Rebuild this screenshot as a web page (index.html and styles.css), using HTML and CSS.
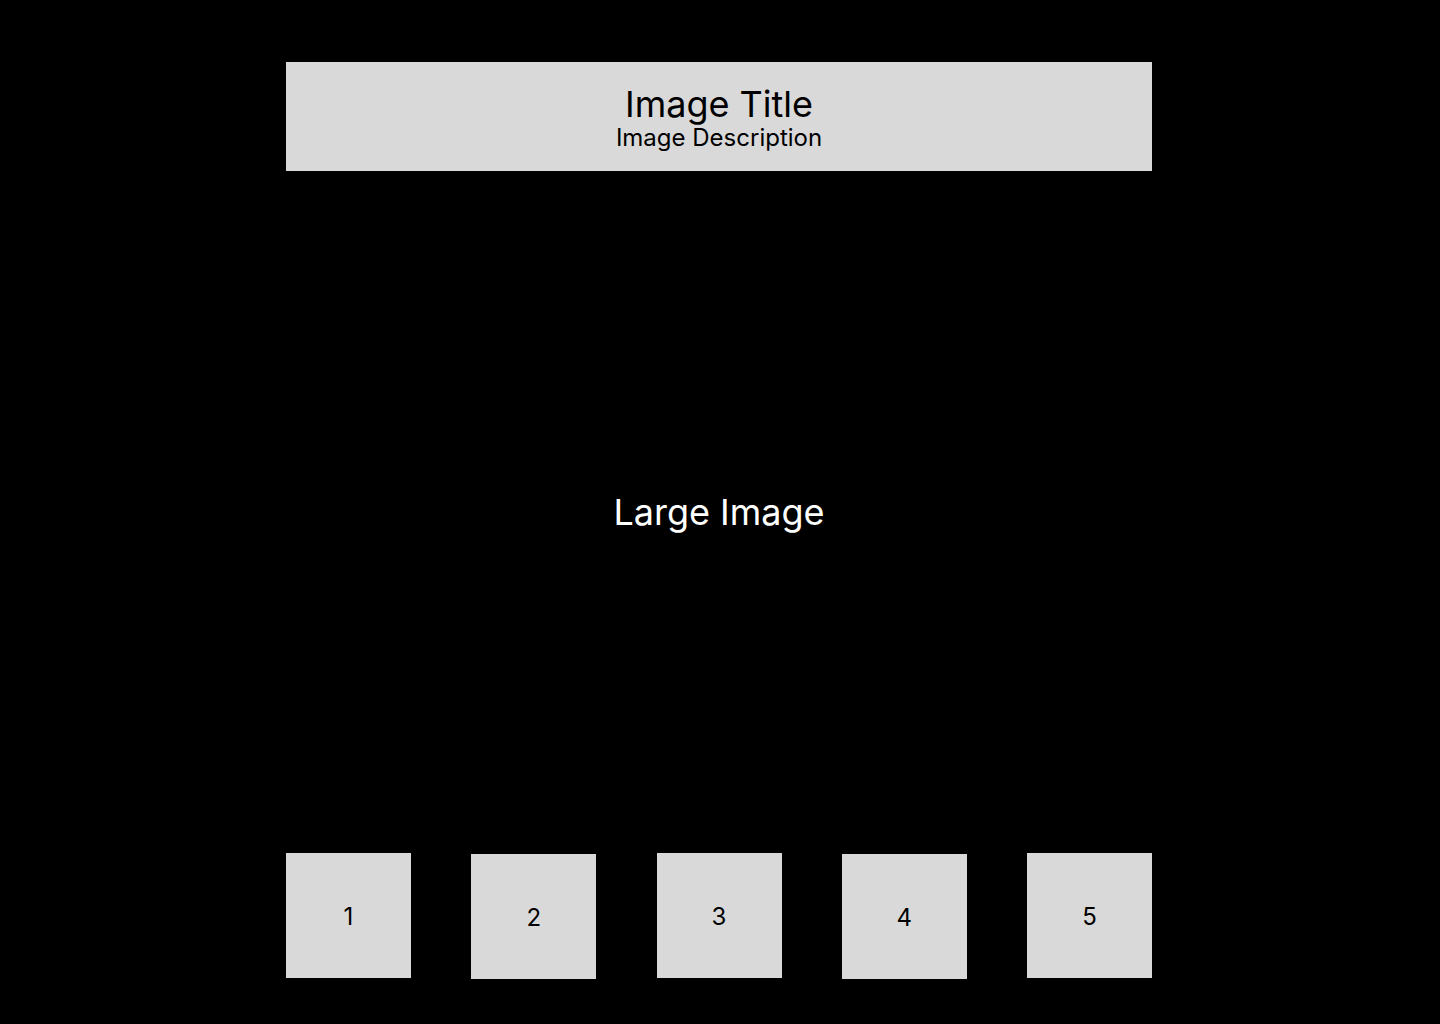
FILE: index.html
```html
<!DOCTYPE html>
<html lang="en">
<head>
<meta charset="utf-8">
<title>Image Gallery</title>
<link rel="stylesheet" href="styles.css">
</head>
<body>
<div class="gallery">
  <header class="caption">
    <h1 class="caption-title">Image Title</h1>
    <p class="caption-desc">Image Description</p>
  </header>
  <main class="stage">
    <span class="stage-label">Large Image</span>
  </main>
  <nav class="thumbs">
    <div class="thumb">1</div>
    <div class="thumb">2</div>
    <div class="thumb">3</div>
    <div class="thumb">4</div>
    <div class="thumb">5</div>
  </nav>
</div>
</body>
</html>
```
FILE: styles.css
```css
* { box-sizing: border-box; }
html, body {
  margin: 0;
  padding: 0;
  background: #000;
  height: 100%;
}
body {
  font-family: Inter, "Noto Sans", sans-serif;
  color: #000;
}
.gallery {
  width: 866px;
  margin: 0 0 0 286px;
  padding-top: 62px;
  display: flex;
  flex-direction: column;
}
.caption {
  height: 109px;
  padding-top: 2px;
  background: #d9d9d9;
  display: flex;
  flex-direction: column;
  align-items: center;
  justify-content: center;
}
.caption-title {
  margin: 0;
  font-size: 36px;
  font-weight: 400;
  line-height: 40px;
}
.caption-desc {
  margin: 0;
  font-size: 24px;
  font-weight: 400;
  line-height: 28px;
}
.stage {
  height: 682px;
  display: flex;
  align-items: center;
  justify-content: center;
}
.stage-label {
  color: #fff;
  font-size: 36px;
  line-height: 44px;
}
.thumbs {
  display: flex;
  justify-content: space-between;
  align-items: flex-start;
}
.thumb {
  width: 125px;
  height: 125px;
  padding-top: 1px;
  background: #d9d9d9;
  display: flex;
  align-items: center;
  justify-content: center;
  font-size: 24px;
}
.thumb:nth-child(even) {
  margin-top: 1px;
}
```
